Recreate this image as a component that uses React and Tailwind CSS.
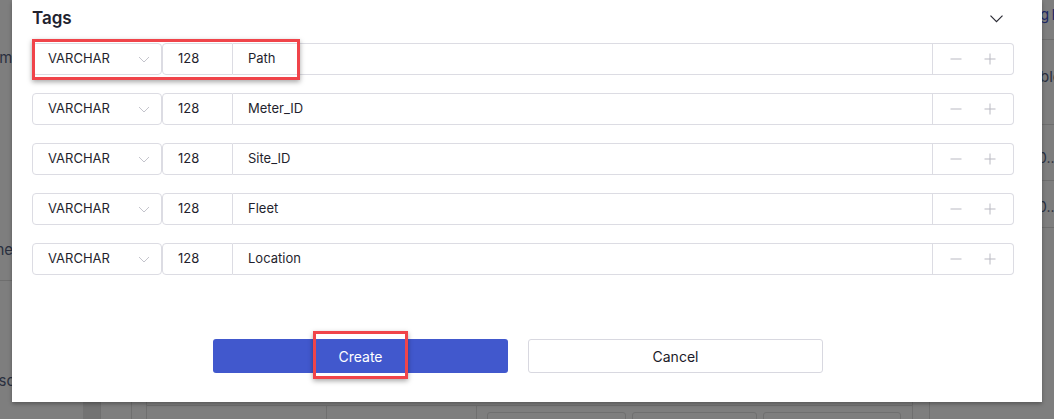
import React from "react";

const rows = ["Path", "Meter_ID", "Site_ID", "Fleet", "Location"];

function SmallChevron({ className }) {
  return (
    <svg width="12" height="7" viewBox="0 0 12 7" className={className} fill="none">
      <path d="M1 1l5 5 5-5" stroke="currentColor" strokeWidth="1" />
    </svg>
  );
}

function Row({ name }) {
  return (
    <div className="flex h-[32px] text-[13px] text-[#1f1f2e]">
      <div className="w-[130px] flex items-center justify-between pl-[15px] pr-[11px] border border-[#dcdce3] rounded-[4px] bg-white">
        <span>VARCHAR</span>
        <SmallChevron className="text-[#c4c4cc]" />
      </div>
      <div className="w-[71px] flex items-center pl-[15px] border border-[#dcdce3] rounded-l-[4px]">128</div>
      <div className="flex-1 flex items-center pl-[15px] border-y border-r border-[#dcdce3]">{name}</div>
      <div className="w-[81px] flex items-center justify-between pl-[17px] pr-[17px] border-y border-r border-[#dcdce3] rounded-r-[4px]">
        <svg width="12" height="12" viewBox="0 0 12 12" fill="none">
          <path d="M0.5 6h11" stroke="#b9b9c2" strokeWidth="1" />
        </svg>
        <svg width="12" height="12" viewBox="0 0 12 12" fill="none">
          <path d="M0.5 6h11M6 0.5v11" stroke="#b9b9c2" strokeWidth="1" />
        </svg>
      </div>
    </div>
  );
}

export default function App() {
  return (
    <div
      className="w-[1054px] h-[419px] overflow-hidden bg-[#7e7e7e] flex flex-col"
      style={{ fontFamily: "Inter, 'Noto Sans', sans-serif" }}
    >
      <div className="flex h-[402px] shrink-0">
        {/* left dimmed page strip */}
        <div className="w-[12px] shrink-0 flex flex-col items-end overflow-hidden text-[15px] text-[#2a3040] whitespace-nowrap">
          <div className="h-[48px]" />
          <span className="leading-[20px] mr-[-4px]">mi</span>
          <div className="h-[172px]" />
          <span className="leading-[20px] mr-[-1px]">ne</span>
          <div className="h-[20px]" />
          <div className="w-[12px] h-px bg-[#6e6e6e]" />
          <div className="h-[90px]" />
          <span className="leading-[20px] mr-[-3px]">sc</span>
        </div>

        {/* modal */}
        <div className="relative z-10 w-[1030px] shrink-0 bg-white shadow-[0_2px_4px_rgba(0,0,0,0.3)] pl-[20px] pr-[28px]">
          <div className="flex items-center justify-between h-[38px] pr-[11px]">
            <span className="text-[17px] font-semibold text-[#22222e]">Tags</span>
            <svg width="13" height="8" viewBox="0 0 13 8" fill="none">
              <path d="M0.5 0.7l6 6 6-6" stroke="#2a2a33" strokeWidth="1.2" />
            </svg>
          </div>
          <div className="flex flex-col gap-[18px] mt-[5px]">
            {rows.map((r) => (
              <Row key={r} name={r} />
            ))}
          </div>
          <div className="flex gap-[20px] pl-[181px] mt-[64px]">
            <button className="w-[295px] h-[34px] bg-[#4158cd] text-white text-[14px] rounded-[3px]">Create</button>
            <button className="w-[295px] h-[34px] bg-white border border-[#d8d8e0] text-[#1a1a28] text-[14px] rounded-[3px]">Cancel</button>
          </div>

          {/* annotation boxes drawn over the form */}
          <div className="absolute left-[20px] top-[39px] w-[268px] h-[41px] border-[3px] border-[#f0444a] shadow-[0_2px_5px_rgba(0,0,0,0.35)]" />
          <div className="absolute left-[301px] top-[331px] w-[95px] h-[48px] border-[3px] border-[#f0444a] shadow-[0_2px_5px_rgba(0,0,0,0.35)]" />
        </div>

        {/* right dimmed page strip */}
        <div className="w-[12px] shrink-0 flex flex-col overflow-hidden text-[15px] text-[#2a3040] whitespace-nowrap">
          <span className="leading-[20px] mt-[5px] ml-[-2px] text-[#1e2a66] tracking-[-1px]">g F</span>
          <div className="h-[15px] border-b border-[#6e6e6e]" />
          <span className="leading-[20px] mt-[27px] ml-[-2px]">ble</span>
          <div className="h-[38px] border-b border-[#6e6e6e]" />
          <span className="leading-[20px] mt-[23px] ml-[-4px] text-[14px]">0...</span>
          <div className="h-[13px] border-b border-[#6e6e6e]" />
          <span className="leading-[20px] mt-[16px] ml-[-4px] text-[14px]">0...</span>
          <div className="h-[11px] border-b border-[#6e6e6e]" />
        </div>
      </div>

      {/* bottom dimmed page strip */}
      <div className="flex flex-1">
        <div className="w-[83px] shrink-0" />
        <div className="w-[17px] shrink-0 bg-[#737373]" />
        <div className="w-[31px] shrink-0 border-l border-[#6f6f6f]" />
        <div className="w-[15px] shrink-0 border-l border-[#6f6f6f]" />
        <div className="w-[767px] shrink-0 border-l border-r border-[#6f6f6f] flex">
          <div className="w-[180px] border-r border-t border-[#6f6f6f] mt-[3px]" />
          <div className="w-[150px] border-r border-t border-[#6f6f6f] mt-[3px]" />
          <div className="flex-1 border-t border-[#6f6f6f] mt-[3px] flex gap-[6px] pl-[10px] pt-[6px]">
            <div className="w-[139px] h-[20px] border border-[#6f6f6f] rounded-[3px]" />
            <div className="w-[125px] h-[20px] border border-[#6f6f6f] rounded-[3px]" />
            <div className="w-[138px] h-[20px] border border-[#6f6f6f] rounded-[3px]" />
          </div>
        </div>
        <div className="w-[17px] shrink-0 border-r border-[#6f6f6f]" />
      </div>
    </div>
  );
}
